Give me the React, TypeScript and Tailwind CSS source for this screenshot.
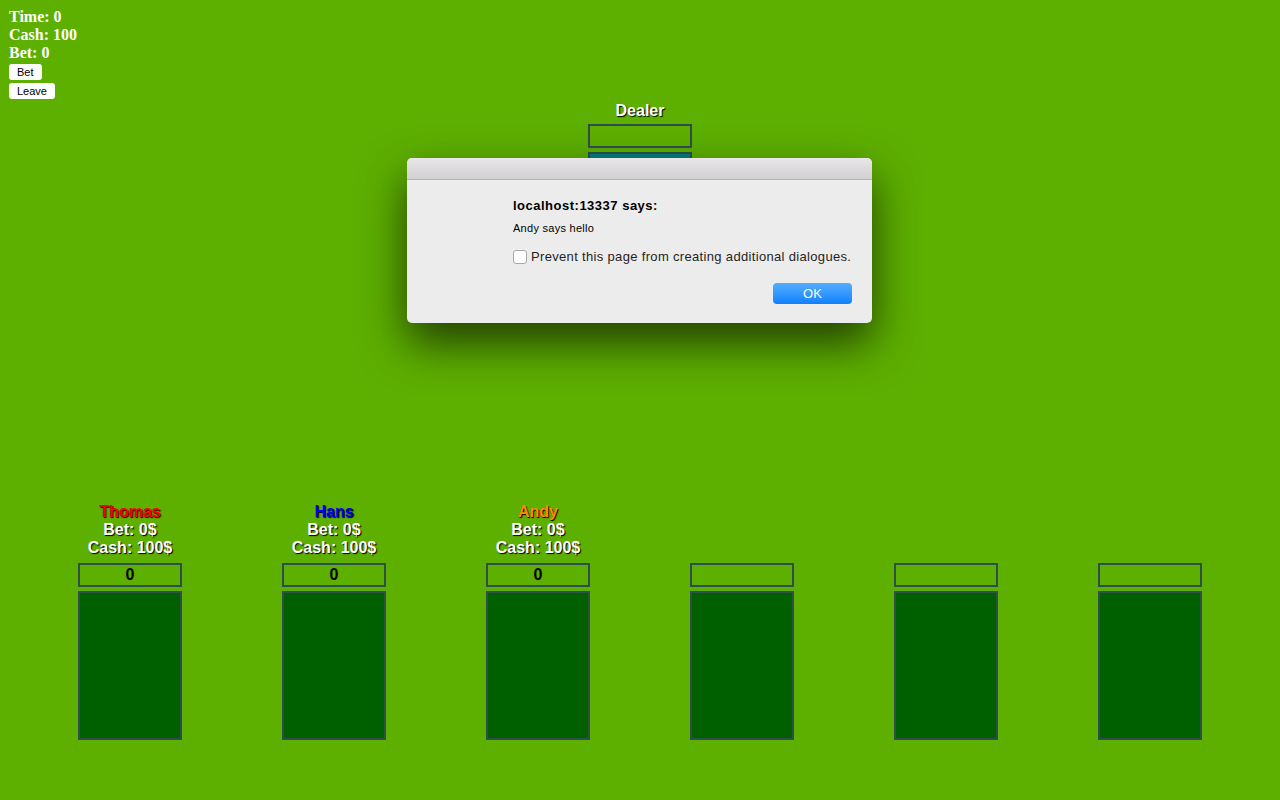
const players = [
  { name: 'Thomas', color: 'text-[#ff0000]', bet: '0' },
  { name: 'Hans', color: 'text-[#0000ff]', bet: '0' },
  { name: 'Andy', color: 'text-[#ff8c00]', bet: '0' },
  null,
  null,
  null,
]

const shadow = '[text-shadow:1px_1px_1px_#000]'

function Seat({ player }: { player: (typeof players)[number] }) {
  return (
    <div className="w-[204px] flex flex-col items-center">
      <div className={`h-[54px] pt-[1px] flex flex-col items-center font-bold text-[16px] leading-[18px] text-white ${shadow}`}>
        {player && (
          <>
            <span className={player.color}>{player.name}</span>
            <span>Bet: 0$</span>
            <span>Cash: 100$</span>
          </>
        )}
      </div>
      <div className="mt-[7px] w-[104px] h-[24px] border-2 border-[#2f4f4f] flex items-center justify-center text-[16px] font-bold text-black">
        {player?.bet}
      </div>
      <div className="mt-[4px] w-[104px] h-[149px] border-2 border-[#2f4f4f] bg-[#006000]" />
    </div>
  )
}

export default function App() {
  return (
    <div className="relative w-full h-[800px] bg-[#5daf00] overflow-hidden font-['Liberation_Sans',Arial,sans-serif]">
      {/* Status */}
      <div className="pl-[9px] pt-[8px] font-['Liberation_Serif',serif] font-bold text-[16px] leading-[18px] text-white">
        <div>Time: 0</div>
        <div>Cash: 100</div>
        <div>Bet: 0</div>
        <div className="mt-[2px] flex flex-col items-start gap-[3px]">
          <button className="h-[16px] px-[8px] bg-white rounded-[3px] text-black text-[11px] leading-[16px] font-normal font-['Liberation_Sans',Arial,sans-serif]">Bet</button>
          <button className="h-[16px] px-[8px] bg-white rounded-[3px] text-black text-[11px] leading-[16px] font-normal font-['Liberation_Sans',Arial,sans-serif]">Leave</button>
        </div>
      </div>

      {/* Dealer */}
      <div className="mt-[2px] flex flex-col items-center">
        <div className={`pt-[1px] h-[18px] text-[16px] leading-[18px] font-bold text-white ${shadow}`}>Dealer</div>
        <div className="mt-[5px] w-[104px] h-[24px] border-2 border-[#2f4f4f]" />
        <div className="mt-[4px] w-[104px] h-[150px] border-2 border-[#2f4f4f] bg-[#008080]" />
      </div>

      {/* Players */}
      <div className="mt-[200px] flex justify-center">
        {players.map((p, i) => (
          <Seat key={i} player={p} />
        ))}
      </div>

      {/* Alert dialog */}
      <div className="absolute left-[407px] top-[158px] w-[465px] h-[165px] rounded-[5px] bg-[#ececec] shadow-[0_20px_45px_rgba(0,0,0,0.65)] overflow-hidden">
        <div className="h-[22px] bg-gradient-to-b from-[#e9e7e9] to-[#d2d0d2] border-b border-[#b5b5b5]" />
        <div className="pl-[106px] pr-[20px]">
          <div className="mt-[18px] text-[13px] leading-[16px] font-bold tracking-[0.5px] text-black">localhost:13337 says:</div>
          <div className="mt-[7px] text-[11px] leading-[14px] tracking-[0.27px] text-black">Andy says hello</div>
          <div className="mt-[14px] flex items-center gap-[4px] text-[13px] leading-[16px] tracking-[0.33px] text-[#1f1f1f]">
            <span className="w-[14px] h-[14px] rounded-[3px] border border-[#a9a9a9] bg-white" />
            <span>Prevent this page from creating additional dialogues.</span>
          </div>
          <div className="mt-[18px] flex justify-end">
            <button className="w-[79px] h-[21px] rounded-[4px] bg-gradient-to-b from-[#52aefd] to-[#0a80fe] text-white text-[13px] leading-[21px]">OK</button>
          </div>
        </div>
      </div>
    </div>
  )
}
